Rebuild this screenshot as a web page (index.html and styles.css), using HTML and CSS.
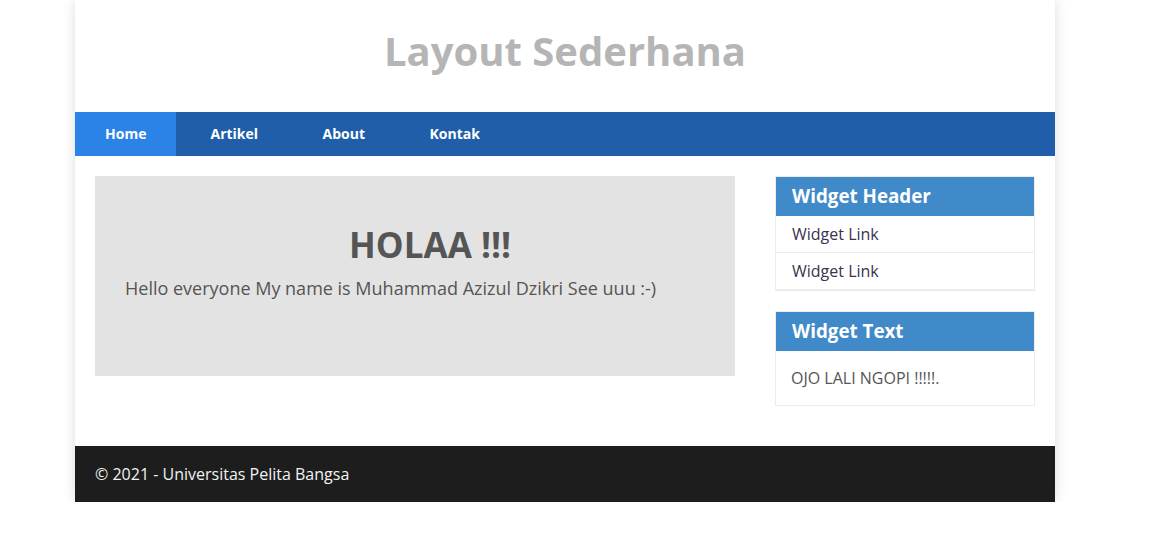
FILE: index.html
```html
<!DOCTYPE html>
<html lang="id">
<head>
<meta charset="utf-8">
<title>Layout Sederhana</title>
<link rel="stylesheet" href="styles.css">
</head>
<body>
<div class="wrap">
  <header class="site-header">
    <h1 class="site-title">Layout Sederhana</h1>
  </header>
  <nav class="nav">
    <a class="nav-item active" href="#">Home</a>
    <a class="nav-item" href="#">Artikel</a>
    <a class="nav-item" href="#">About</a>
    <a class="nav-item" href="#">Kontak</a>
  </nav>
  <div class="content">
    <main class="main">
      <section class="hero">
        <h1 class="hero-title">HOLAA !!!</h1>
        <p class="hero-text">Hello everyone My name is Muhammad Azizul Dzikri See uuu :-)</p>
      </section>
    </main>
    <aside class="sidebar">
      <div class="widget">
        <h3 class="widget-header">Widget Header</h3>
        <ul class="widget-list">
          <li><a href="#">Widget Link</a></li>
          <li><a href="#">Widget Link</a></li>
        </ul>
      </div>
      <div class="widget">
        <h3 class="widget-header">Widget Text</h3>
        <div class="widget-body">OJO LALI NGOPI !!!!!.</div>
      </div>
    </aside>
  </div>
  <footer class="footer">© 2021 - Universitas Pelita Bangsa</footer>
</div>
</body>
</html>
```

FILE: styles.css
```css
* { box-sizing: border-box; }
html, body { margin: 0; padding: 0; background: #fff; }
body {
  font-family: "Open Sans", "Noto Sans", sans-serif;
  color: #555;
}
.wrap {
  width: 980px;
  margin: 0 0 0 75px;
  background: #fff;
  box-shadow: 0 0 12px rgba(0,0,0,0.14);
}
.site-header {
  height: 112px;
  padding-top: 23px;
  text-align: center;
}
.site-title {
  margin: 0;
  font-size: 40px;
  line-height: 56px;
  font-weight: 700;
  color: #b5b5b5;
}
.nav {
  display: flex;
  height: 44px;
  background: #205ea9;
}
.nav-item {
  display: block;
  padding: 0 30px;
  margin-right: 4.5px;
  line-height: 44px;
  font-size: 14px;
  font-weight: 700;
  color: #fff;
  text-decoration: none;
}
.nav-item.active {
  background: #2b83e8;
  width: 101px;
}
.content {
  display: flex;
  gap: 40px;
  padding: 20px;
}
.main { width: 640px; flex: none; }
.hero {
  height: 200px;
  background: #e3e3e3;
  padding: 30px;
}
.hero-title {
  margin: 15px 0 0 30px;
  text-align: center;
  font-size: 35px;
  line-height: 48px;
  font-weight: 700;
  color: #555;
}
.hero-text {
  margin: 6px 0 0;
  font-size: 18px;
  line-height: 26px;
  color: #555;
}
.sidebar { width: 260px; flex: none; }
.widget {
  border: 1px solid #ececec;
  margin-bottom: 20px;
}
.widget:last-child { margin-bottom: 20px; }
.widget-header {
  margin: 0;
  height: 39px;
  padding: 0 16px;
  line-height: 39px;
  background: #418ac9;
  color: #fff;
  font-size: 18.8px;
  font-weight: 700;
}
.widget-list { list-style: none; margin: 0; padding: 0; }
.widget-list li {
  border-bottom: 1px solid #ececec;
  height: 37px;
  line-height: 36px;
  padding: 0 16px;
  font-size: 16px;
}
.widget-list a { color: #3a3350; text-decoration: none; }
.widget-body {
  padding: 0 15px;
  height: 54px;
  font-size: 16px;
  line-height: 54px;
  color: #555;
}
.footer {
  height: 56px;
  background: #1d1d1d;
  color: #f2f2f2;
  padding-left: 20px;
  line-height: 56px;
  font-size: 16px;
}
```
